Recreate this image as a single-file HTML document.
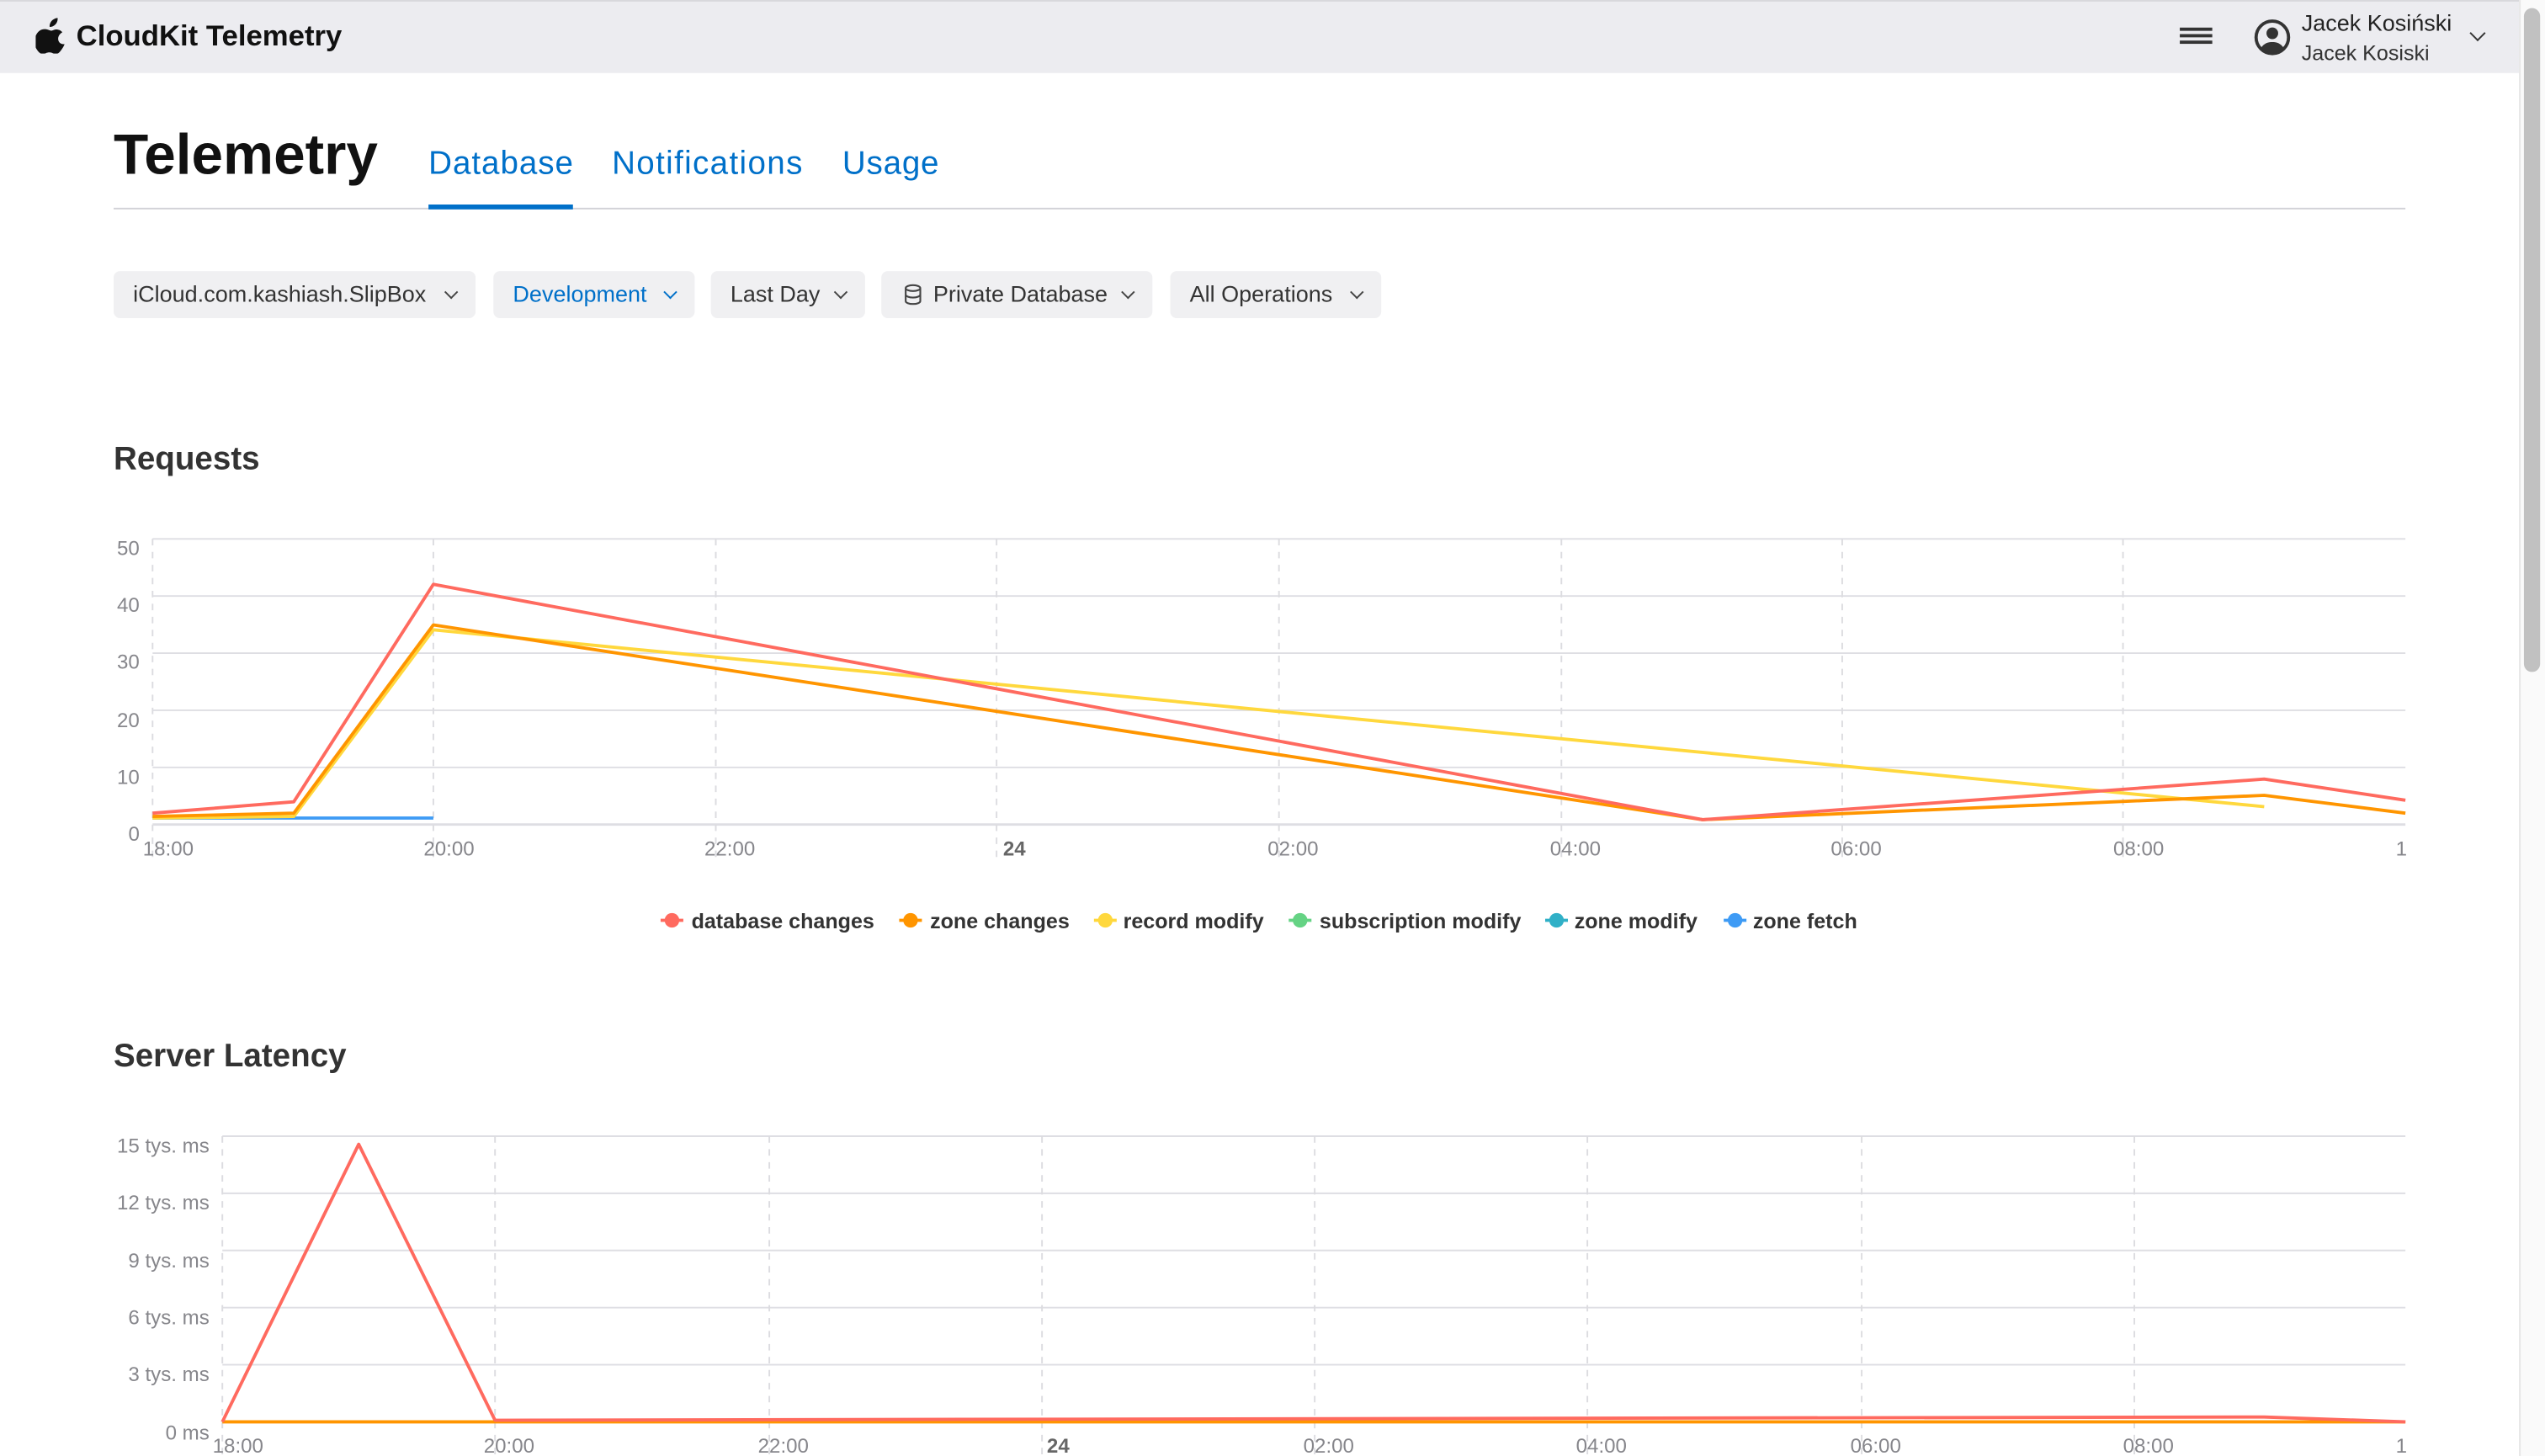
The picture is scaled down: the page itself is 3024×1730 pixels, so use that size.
<!DOCTYPE html>
<html><head><meta charset="utf-8"><style>
html,body{margin:0;padding:0;width:3024px;height:1730px;overflow:hidden;background:#fff}
#s{position:absolute;left:0;top:0;width:1568px;height:897px;transform:scale(1.928571);transform-origin:0 0;font-family:"Liberation Sans",sans-serif;color:#1d1d1f}
.hdr{position:absolute;left:0;top:0;width:1552px;height:45px;background:#ececf0;border-top:1px solid #d8d8dc;box-sizing:border-box}
.ab{position:absolute;white-space:nowrap}
.dd{position:absolute;top:167px;height:29px;background:#f0f0f2;border-radius:4px;font-size:14px;line-height:29px;color:#333;box-sizing:border-box;padding-left:12px}
.dd:after{content:"";position:absolute;right:12px;top:10px;width:5px;height:5px;border-right:1.3px solid #444;border-bottom:1.3px solid #444;transform:rotate(45deg)}
.dd.b{color:#0070c9}.dd.b:after{border-color:#0070c9}
svg text{font-family:"Liberation Sans",sans-serif}
</style></head><body><div id="s">
<div class="hdr"></div>
<svg class="ab" style="left:22px;top:11px" width="20" height="22" viewBox="0 0 20 22"><path d="M13.5 0c.2 1.5-.4 3-1.3 4-.9 1-2.3 1.7-3.6 1.6-.2-1.4.5-2.9 1.3-3.8C10.8.8 12.3.1 13.5 0zM17.8 16.2c-.5 1.2-.8 1.700-1.5 2.8-1 1.500-2.300 3.300-4 3.300-1.500 0-1.900-1-3.900-1s-2.500 1-4 1c-1.700 0-2.900-1.600-3.900-3.100C-2.200 14.900-.1 8.400 3.800 7.200c1.200-.4 2.600-.3 3.700.1.800.3 1.400.6 2 .6s1.500-.5 2.500-.7c1.600-.2 3.300.3 4.400 1.700-3.900 2.100-3.300 7.700 1.400 7.300z" fill="#111"/></svg>
<div class="ab" style="left:47px;top:12px;font-size:18px;font-weight:bold;color:#111">CloudKit Telemetry</div>
<div class="ab" style="left:1343px;top:17px;width:20px;height:2px;background:#333;box-shadow:0 4px 0 #333,0 8px 0 #333"></div>
<svg class="ab" style="left:1388px;top:11px" width="24" height="24" viewBox="0 0 24 24"><circle cx="12" cy="12" r="10" fill="none" stroke="#333" stroke-width="2"/><circle cx="12" cy="9.5" r="3.6" fill="#333"/><path d="M5 18.5c2-3 4.5-3.6 7-3.6s5 .6 7 3.6a10 10 0 0 1-14 0z" fill="#333"/></svg>
<div class="ab" style="left:1418px;top:6px;font-size:14px;color:#222">Jacek Kosiński</div>
<div class="ab" style="left:1418px;top:25px;font-size:13px;color:#333">Jacek Kosiski</div>
<div class="ab" style="left:1523px;top:17px;width:6px;height:6px;border-right:1.6px solid #333;border-bottom:1.6px solid #333;transform:rotate(45deg)"></div>
<div class="ab" style="left:1552px;top:0;width:16px;height:897px;background:#fafafa;border-left:1px solid #e6e6e6;box-sizing:border-box"></div>
<div class="ab" style="left:1555px;top:5px;width:10px;height:409px;background:#c1c1c1;border-radius:5px"></div>

<div class="ab" style="left:70px;top:76px;font-size:35px;font-weight:bold;color:#111">Telemetry</div>
<div class="ab" style="left:264px;top:90px;font-size:20px;color:#0070c9;letter-spacing:0.5px">Database</div>
<div class="ab" style="left:377px;top:90px;font-size:20px;color:#0070c9;letter-spacing:0.7px">Notifications</div>
<div class="ab" style="left:519px;top:90px;font-size:20px;color:#0070c9;letter-spacing:0.4px">Usage</div>
<div class="ab" style="left:70px;top:128px;width:1412px;height:1px;background:#d2d2d7"></div>
<div class="ab" style="left:264px;top:126px;width:89px;height:3px;background:#0070c9"></div>

<div class="dd" style="left:70px;width:223px">iCloud.com.kashiash.SlipBox</div>
<div class="dd b" style="left:304px;width:124px">Development</div>
<div class="dd" style="left:438px;width:95px">Last Day</div>
<div class="dd" style="left:543px;width:167px;padding-left:32px"><svg style="position:absolute;left:14px;top:8px" width="11" height="13" viewBox="0 0 11 13"><ellipse cx="5.5" cy="2.5" rx="4.5" ry="1.8" fill="none" stroke="#444" stroke-width="1.1"/><path d="M1 2.5v8c0 1 2 1.8 4.5 1.8S10 11.500 10 10.500v-8M1 6.500c0 1 2 1.800 4.500 1.800S10 7.500 10 6.500" fill="none" stroke="#444" stroke-width="1.1"/></svg>Private Database</div>
<div class="dd" style="left:721px;width:130px">All Operations</div>

<div class="ab" style="left:70px;top:272px;font-size:20px;font-weight:bold;color:#333">Requests</div>
<svg class="ab" style="left:0;top:0" width="1552" height="897">
<g stroke="#dedee3" stroke-width="1">
<line x1="94" y1="332" x2="1482" y2="332"/><line x1="94" y1="367.2" x2="1482" y2="367.2"/><line x1="94" y1="402.4" x2="1482" y2="402.4"/><line x1="94" y1="437.6" x2="1482" y2="437.6"/><line x1="94" y1="472.8" x2="1482" y2="472.8"/><line x1="94" y1="508" x2="1482" y2="508" stroke-width="1.5"/>
</g>
<g stroke="#dcdce0" stroke-dasharray="4,4"><line x1="94" y1="332" x2="94" y2="528"/><line x1="267" y1="332" x2="267" y2="528"/><line x1="441" y1="332" x2="441" y2="528"/><line x1="614" y1="332" x2="614" y2="528"/><line x1="788" y1="332" x2="788" y2="528"/><line x1="962" y1="332" x2="962" y2="528"/><line x1="1135" y1="332" x2="1135" y2="528"/><line x1="1308" y1="332" x2="1308" y2="528"/></g>
<g font-size="12.5" fill="#86868b" text-anchor="end"><text x="86" y="342">50</text><text x="86" y="377">40</text><text x="86" y="412">30</text><text x="86" y="448">20</text><text x="86" y="483">10</text><text x="86" y="518">0</text></g>
<g font-size="12.5" fill="#86868b"><text x="88" y="527">18:00</text><text x="261" y="527">20:00</text><text x="434" y="527">22:00</text><text x="618" y="527" font-weight="bold" fill="#666">24</text><text x="781" y="527">02:00</text><text x="955" y="527">04:00</text><text x="1128" y="527">06:00</text><text x="1302" y="527">08:00</text><text x="1476" y="527">1</text></g>
<g fill="none" stroke-width="2" stroke-linejoin="round">
<polyline stroke="#3e9bf5" points="94,504 267,504"/>
<polyline stroke="#ffd83d" points="94,504 181,503 267,388 1395,497"/>
<polyline stroke="#ff9500" points="94,503 181,501 267,385 1049,505 1395,490 1482,501"/>
<polyline stroke="#ff6a5f" points="94,501 181,494 267,360 1049,505 1395,480 1482,493"/>
</g>
<g font-size="13" fill="#333" font-weight="bold" stroke-width="2">
<line x1="407" y1="567" x2="421" y2="567" stroke="#ff6a5f"/><circle cx="414" cy="567" r="4.5" fill="#ff6a5f"/><text x="426" y="572">database changes</text>
<line x1="554" y1="567" x2="568" y2="567" stroke="#ff9500"/><circle cx="561" cy="567" r="4.5" fill="#ff9500"/><text x="573" y="572">zone changes</text>
<line x1="674" y1="567" x2="688" y2="567" stroke="#ffd83d"/><circle cx="681" cy="567" r="4.5" fill="#ffd83d"/><text x="692" y="572">record modify</text>
<line x1="794" y1="567" x2="808" y2="567" stroke="#65d384"/><circle cx="801" cy="567" r="4.5" fill="#65d384"/><text x="813" y="572">subscription modify</text>
<line x1="952" y1="567" x2="966" y2="567" stroke="#30b0c7"/><circle cx="959" cy="567" r="4.5" fill="#30b0c7"/><text x="970" y="572">zone modify</text>
<line x1="1062" y1="567" x2="1076" y2="567" stroke="#3e9bf5"/><circle cx="1069" cy="567" r="4.5" fill="#3e9bf5"/><text x="1080" y="572">zone fetch</text>
</g>

<g stroke="#dedee3" stroke-width="1">
<line x1="137" y1="700" x2="1482" y2="700"/><line x1="137" y1="735.2" x2="1482" y2="735.2"/><line x1="137" y1="770.4" x2="1482" y2="770.4"/><line x1="137" y1="805.6" x2="1482" y2="805.6"/><line x1="137" y1="840.8" x2="1482" y2="840.8"/><line x1="137" y1="876" x2="1482" y2="876" stroke-width="1.5"/>
</g>
<g stroke="#dcdce0" stroke-dasharray="4,4"><line x1="137" y1="700" x2="137" y2="897"/><line x1="305" y1="700" x2="305" y2="897"/><line x1="474" y1="700" x2="474" y2="897"/><line x1="642" y1="700" x2="642" y2="897"/><line x1="810" y1="700" x2="810" y2="897"/><line x1="978" y1="700" x2="978" y2="897"/><line x1="1147" y1="700" x2="1147" y2="897"/><line x1="1315" y1="700" x2="1315" y2="897"/></g>
<g font-size="12.5" fill="#86868b" text-anchor="end"><text x="129" y="710">15 tys. ms</text><text x="129" y="745">12 tys. ms</text><text x="129" y="781">9 tys. ms</text><text x="129" y="816">6 tys. ms</text><text x="129" y="851">3 tys. ms</text><text x="129" y="887">0 ms</text></g>
<g font-size="12.5" fill="#86868b"><text x="131" y="895">18:00</text><text x="298" y="895">20:00</text><text x="467" y="895">22:00</text><text x="645" y="895" font-weight="bold" fill="#666">24</text><text x="803" y="895">02:00</text><text x="971" y="895">04:00</text><text x="1140" y="895">06:00</text><text x="1308" y="895">08:00</text><text x="1476" y="895">1</text></g>
<g fill="none" stroke-width="2" stroke-linejoin="round">
<polyline stroke="#ff9500" points="137,876 1482,876"/>
<polyline stroke="#ff6a5f" points="137,876 221,705 305,875 1395,873 1482,876"/>
</g>
</svg>
<div class="ab" style="left:70px;top:640px;font-size:20px;font-weight:bold;color:#333">Server Latency</div>
</div></body></html>
